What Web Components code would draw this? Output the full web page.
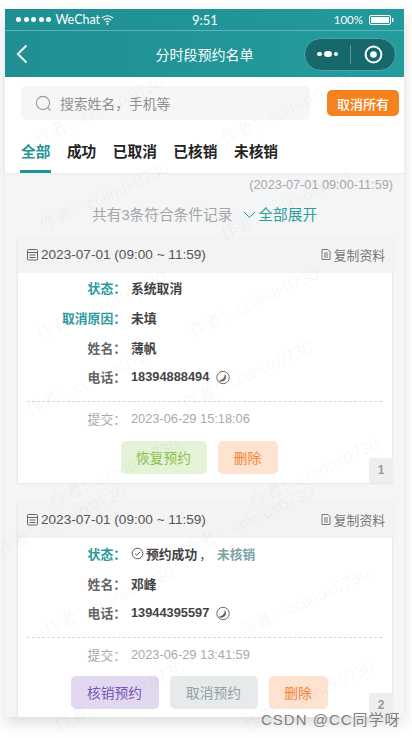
<!DOCTYPE html>
<html lang="zh"><head><meta charset="utf-8"><title>分时段预约名单</title>
<style>
html,body{margin:0;padding:0;background:#fff;width:412px;height:738px;overflow:hidden;font-family:"Liberation Sans","Noto Sans CJK SC",sans-serif}
</style></head><body>
<x-phone>
  <x-status-bar></x-status-bar>
  <x-nav-bar title="分时段预约名单"></x-nav-bar>
  <x-search-bar placeholder="搜索姓名，手机等" action="取消所有"></x-search-bar>
  <x-tabs items="全部,成功,已取消,已核销,未核销"></x-tabs>
  <x-summary range="(2023-07-01 09:00-11:59)" count="共有3条符合条件记录" expand="全部展开"></x-summary>
  <x-card date="2023-07-01 (09:00 ~ 11:59)" num="1" style="--top:0px;--rows-top:0px;--act-top:5px">
    <x-row label="状态" accent><b>系统取消</b></x-row>
    <x-row label="取消原因" accent><b>未填</b></x-row>
    <x-row label="姓名"><b>薄帆</b></x-row>
    <x-row label="电话"><b>18394888494</b><x-phone-icon></x-phone-icon></x-row>
    <x-submit slot="foot" time="2023-06-29 15:18:06"></x-submit>
    <x-btn slot="actions" w="86" bg="#e4f2d5" fg="#8cc152">恢复预约</x-btn>
    <x-btn slot="actions" w="60" bg="#fde3d0" fg="#f58233">删除</x-btn>
  </x-card>
  <x-card date="2023-07-01 (09:00 ~ 11:59)" num="2" style="--top:18px;--rows-top:1px;--act-top:4px">
    <x-row label="状态" accent><x-check-icon></x-check-icon><b>预约成功</b><span style="color:#555;margin:0 5px 0 2px">，</span><b style="color:#7fa3a5">未核销</b></x-row>
    <x-row label="姓名"><b>邓峰</b></x-row>
    <x-row label="电话"><b>13944395597</b><x-phone-icon></x-phone-icon></x-row>
    <x-submit slot="foot" time="2023-06-29 13:41:59"></x-submit>
    <x-btn slot="actions" w="88" bg="#e2d8ef" fg="#7a54c0">核销预约</x-btn>
    <x-btn slot="actions" w="88" bg="#e6eaeb" fg="#93a0a3">取消预约</x-btn>
    <x-btn slot="actions" w="59" bg="#fde3d0" fg="#f58233">删除</x-btn>
  </x-card>
</x-phone>
<x-watermarks></x-watermarks>
<script>
const def=(name,css,html,init)=>customElements.define(name,class extends HTMLElement{
  connectedCallback(){
    if(this.shadowRoot)return;
    const r=this.attachShadow({mode:'open'});
    const get=k=>this.getAttribute(k)||'';
    r.innerHTML='<style>'+css+'</style>'+(typeof html==='function'?html(get,this):html);
    if(init)init(r,this);
  }
});
def('x-phone',`:host{display:flex;flex-direction:column;width:399px;height:708px;margin:9px 0 0 5px;background:#f4f5f6;overflow:hidden;box-shadow:0 6px 14px rgba(0,0,0,.14)}`,`<slot></slot>`);
def('x-status-bar',`:host{display:flex;align-items:center;height:21px;background:linear-gradient(90deg,#1f8f93,#229a9b);border-bottom:1px solid #5cb6b8;color:#fff;font:12.5px Lato,"Liberation Sans",sans-serif;position:relative;flex:none}
.dots{display:flex;gap:2.6px;margin:0 4px 0 11px}.dots i{width:5px;height:5px;border-radius:50%;background:#fff}
.time{position:absolute;left:187px;top:3px;font-size:13px}
.r{margin-left:auto;display:flex;align-items:center;gap:6px;margin-right:10px;font-size:11.5px}
svg{display:block}`,
`<div class="dots"><i></i><i></i><i></i><i></i><i></i></div><span>WeChat</span>
<svg width="13" height="10" viewBox="0 0 13 10" style="margin-left:1px"><g fill="none" stroke="#fff" stroke-width="1.1"><path d="M.8 3.2a8 8 0 0 1 11.4 0"/><path d="M2.8 5.2a5.2 5.2 0 0 1 7.4 0"/><path d="M4.7 7.2a2.6 2.6 0 0 1 3.6 0"/></g><circle cx="6.5" cy="8.9" r="1" fill="#fff"/></svg>
<span class="time">9:51</span>
<div class="r"><span>100%</span><svg width="25" height="10" viewBox="0 0 25 10"><rect x=".5" y=".5" width="21" height="9" rx="1.5" fill="none" stroke="#fff"/><rect x="2" y="2" width="18" height="6" fill="#fff"/><rect x="23" y="3" width="1.4" height="4" fill="#fff"/></svg></div>`);
def('x-nav-bar',`:host{display:flex;align-items:center;height:46px;flex:none;background:linear-gradient(90deg,#1f8f93,#249c9d);color:#fff;position:relative}
.back{margin-left:11px;display:block}
.t{position:absolute;left:0;width:399px;text-align:center;font-size:14px;top:14.5px;line-height:19px}
.cap{margin-left:auto;margin-right:8px;width:92px;height:33px;box-sizing:border-box;border:1px solid #4da5a7;border-radius:17px;background:#17686c;display:flex;align-items:center}
.d{display:flex;align-items:center;gap:2px;width:45px;justify-content:center}.d i{display:block;width:4.5px;height:4.5px;border-radius:50%;background:#fff}.d i:nth-child(2){width:8px;height:6.5px}
.sep{width:1px;height:19px;background:#4f9a9d}
.o{margin-left:13px;display:block}`,
(g)=>`<svg class="back" width="12" height="20" viewBox="0 0 12 20"><path d="M10.5 1.5 1.8 10l8.7 8.5" fill="none" stroke="#fff" stroke-width="1.8"/></svg><div class="t">${g('title')}</div>
<div class="cap"><div class="d"><i></i><i></i><i></i></div><div class="sep"></div><svg class="o" width="19" height="19" viewBox="0 0 19 19"><circle cx="9.5" cy="9.5" r="7.9" fill="none" stroke="#fff" stroke-width="2"/><circle cx="9.5" cy="9.5" r="3.3" fill="#fff"/></svg></div>`);
def('x-search-bar',`:host{display:flex;align-items:center;gap:17px;background:#fff;padding:9px 5px 10px 16px;height:34px;flex:none}
.b{width:289px;height:34px;background:#f6f6f6;border-radius:5px;display:flex;align-items:center;color:#8f8f8f;font-size:13.8px;gap:8px;padding-left:14px;box-sizing:border-box}
svg{display:block}
.a{width:72px;height:26px;border-radius:5px;background:#f5811f;color:#fff;font-size:13px;display:flex;align-items:center;justify-content:center;font-weight:500}`,
(g)=>`<div class="b"><svg width="17" height="17" viewBox="0 0 17 17"><circle cx="8" cy="8" r="6.6" fill="none" stroke="#999" stroke-width="1.1"/><path d="M12.8 12.8 15.5 15.5" stroke="#999" stroke-width="1.1"/></svg><span>${g('placeholder')}</span></div><div class="a">${g('action')}</div>`);
def('x-tabs',`:host{display:flex;gap:16.5px;background:#fff;height:43px;padding-left:16px;flex:none;box-shadow:0 1px 2px rgba(0,0,0,.05);position:relative}
.t{font-size:14.7px;font-weight:700;color:#222;line-height:44px;height:43px;box-sizing:border-box;white-space:nowrap}
.t.on{color:#1f9598;border-bottom:3px solid #1f9598;padding:0 1px;margin:0 -1px}`,
(g)=>g('items').split(',').map((s,i)=>`<div class="t${i?'':' on'}">${s}</div>`).join(''));
def('x-summary',`:host{display:block;flex:none;height:64px;color:#aaa}
.r{text-align:right;padding:5px 11px 0 0;line-height:14px;color:#a8a8a8;font-size:12.7px}
.m{display:flex;margin:13px 0 0 87px;font-size:14.7px;line-height:20px;color:#a5a5a5;white-space:nowrap}
.e{color:#2b9d9f;margin-left:11px;display:flex;align-items:center;gap:2px}svg{display:block}`,
(g)=>`<div class="r">${g('range')}</div><div class="m"><span>${g('count')}</span><span class="e"><svg width="13" height="8" viewBox="0 0 13 8"><path d="M1 1l5.5 5.500L12 1" fill="none" stroke="#2b9d9f" stroke-width="1"/></svg>${g('expand')}</span></div>`);
def('x-card',`:host{display:block;flex:none;margin:var(--top,0) 11px 0 12px;background:#fff;border:1px solid #e9e9e9;border-top:0;position:relative;box-shadow:0 0 2px rgba(0,0,0,.04)}
.h{height:36px;background:#f3f3f3;display:flex;align-items:center;padding:0 8px 1px 8px;box-sizing:border-box;font-size:13.6px;color:#555;gap:2px;margin:0 -1px 0 0}
svg{display:block}
.c{margin-left:auto;display:flex;align-items:center;gap:2px;font-size:12.8px;color:#777}
.rows{padding-top:var(--rows-top,0)}
.line{border-top:1px dashed #d8d8d8;margin:9px 10px 0 9px}
.act{display:flex;justify-content:center;gap:11px;padding:var(--act-top,5px) 12px 9px 0}
.n{position:absolute;right:-1px;bottom:0;width:24px;height:25px;background:#eee;border-radius:3px 3px 0 0;color:#999;font:700 12px/25px "Liberation Sans",sans-serif;text-align:center}`,
(g)=>`<div class="h"><svg width="13" height="13" viewBox="0 0 13 13"><rect x="1.5" y="1.5" width="10" height="10.5" rx="1" fill="none" stroke="#666"/><path d="M1.5 4.5h10M3.5 7h6M3.5 9.5h6" stroke="#666"/></svg><span>${g('date')}</span><span class="c"><svg width="12" height="13" viewBox="0 0 12 13"><path d="M2 1.5h6l2 2v8H2z" fill="none" stroke="#777"/><path d="M4 5h4M4 7h4M4 9h4" stroke="#777"/></svg>复制资料</span></div>
<div class="rows"><slot></slot></div><div class="line"></div><slot name="foot"></slot><div class="act"><slot name="actions"></slot></div><div class="n">${g('num')}</div>`);
def('x-row',`:host{display:flex;align-items:center;height:29.7px;font-size:12.8px;color:#444}
.l{width:108px;text-align:right;flex:none;font-weight:700;color:#666;white-space:nowrap}
:host([accent]) .l{color:#2a9a9d}
.v{margin-left:5px;display:flex;align-items:center;white-space:nowrap}`,
(g)=>`<div class="l">${g('label')}：</div><div class="v"><slot></slot></div>`);
def('x-submit',`:host{display:flex;align-items:center;height:34px;font-size:12.8px;color:#a4abaf}
.l{width:108px;text-align:right;flex:none}.v{margin-left:5px}`,
(g)=>`<div class="l">提交：</div><div class="v">${g('time')}</div>`);
def('x-btn',`:host{display:flex;align-items:center;justify-content:center;height:33px;border-radius:5px;font-size:13.7px;flex:none}`,`<slot></slot>`,
(r,e)=>{e.style.width=e.getAttribute('w')+'px';e.style.background=e.getAttribute('bg');e.style.color=e.getAttribute('fg')});
def('x-phone-icon',`:host{display:block;margin-left:6px;margin-top:2px}svg{display:block}`,`<svg width="15" height="15" viewBox="0 0 14 14"><circle cx="7.5" cy="7" r="5.8" fill="none" stroke="#666" stroke-width=".9"/><path d="M9 3.2c.6 3-1.500 6-5.500 6.800C5 11.600 8.500 11 9.800 8.600 10.800 6.600 10.200 4.500 9 3.200z" fill="#666"/></svg>`);
def('x-check-icon',`:host{display:block;margin-right:2px}svg{display:block}`,`<svg width="13" height="13" viewBox="0 0 13 13"><circle cx="6.500" cy="6.500" r="5.300" fill="none" stroke="#555"/><path d="M4 6.600 5.800 8.300 9 5" fill="none" stroke="#555"/></svg>`);
const wm=[[40,150],[226,150],[45,236],[226,245],[42,345],[195,342],[188,415],[32,420],[55,512],[255,512],[2,560],[190,560],[50,640],[245,642],[60,735],[250,735]];
def('x-watermarks',`:host{display:block;position:absolute;left:0;top:0;width:412px;height:738px;overflow:hidden;pointer-events:none}
.w{position:absolute;font-size:17px;line-height:20px;color:rgba(0,0,0,.045);white-space:nowrap;transform:rotate(-25deg);transform-origin:0 100%}
.c{position:absolute;left:261px;top:711px;font-size:15px;line-height:18px;color:#808080;letter-spacing:1px;white-space:nowrap}`,
()=>wm.map(([x,y])=>`<div class="w" style="left:${x}px;top:${y-20}px">作者：cclinux0730</div>`).join('')+`<div class="c">CSDN @CC同学呀</div>`);
</script>
</body></html>
